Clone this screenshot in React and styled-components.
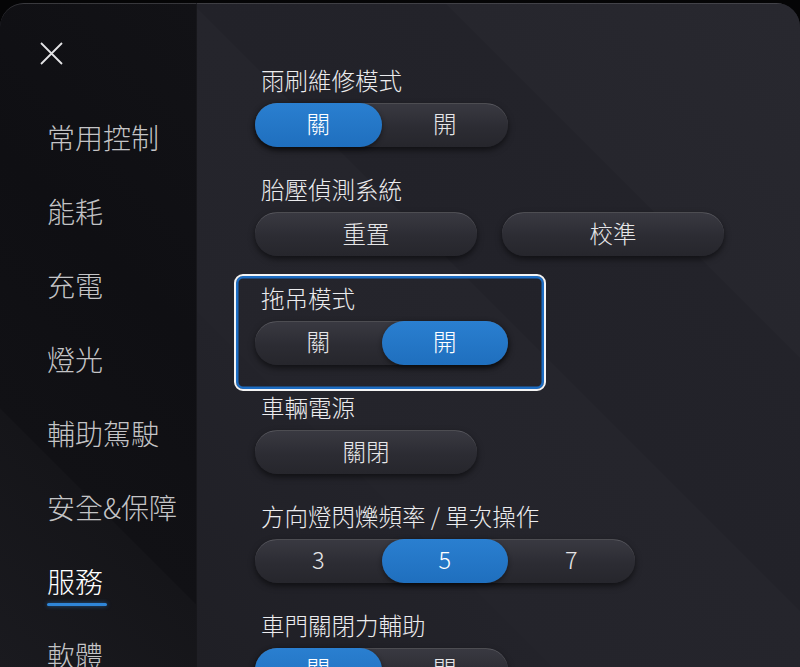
import React from "react";
import styled, { createGlobalStyle, css } from "styled-components";

const Global = createGlobalStyle`
  html, body { margin: 0; padding: 0; background: #050506; }
  body { font-family: "Noto Sans CJK TC", "Noto Sans", sans-serif; }
  #root { height: 667px; overflow: hidden; }
`;

const Screen = styled.div`
  height: 667px;
  padding-top: 3px;
  box-sizing: border-box;
  background: #050506;
`;

const Panel = styled.div`
  height: 100%;
  display: flex;
  border-radius: 24px 24px 0 0;
  overflow: hidden;
  background: #202027;
`;

const Sidebar = styled.nav`
  width: 197px;
  flex: none;
  box-sizing: border-box;
  padding: 38px 0 0 0;
  background: linear-gradient(45deg, #1a1a1f 0%, #151519 30%, #111115 30.2%, #0f0f13 60%, #121216 100%);
  border-right: 1px solid #17171b;
  border-top: 1px solid rgba(255, 255, 255, 0.14);
  border-radius: 24px 0 0 0;
`;

const CloseButton = styled.button`
  display: block;
  margin-left: 40px;
  width: 23px;
  height: 23px;
  padding: 0;
  border: 0;
  background: none;
  cursor: pointer;
`;

const NavList = styled.ul`
  list-style: none;
  margin: 35px 0 0 0;
  padding: 0;
`;

const NavItem = styled.li`
  height: 74px;
  display: flex;
  align-items: center;
  padding-left: 47px;
  font-size: 28px;
  line-height: 36px;
  font-weight: 300;
  color: ${(p) => (p.$active ? "#ffffff" : "#c4c4c6")};
  span {
    position: relative;
  }
  ${(p) =>
    p.$active &&
    css`
      span::after {
        content: "";
        position: absolute;
        left: 0;
        bottom: -7px;
        width: 60px;
        height: 3px;
        border-radius: 2px;
        background: #2f86d8;
        box-shadow: 0 0 4px rgba(47, 134, 216, 0.6);
      }
    `}
`;

const Main = styled.main`
  flex: 1;
  box-sizing: border-box;
  padding: 63px 0 0 58px;
  border-top: 1px solid rgba(255, 255, 255, 0.14);
  background: linear-gradient(
    45deg,
    #1f1f25 0%,
    #23232a 28%,
    #24242b 28.1%,
    #25252c 52%,
    #222229 52.1%,
    #23232a 72%,
    #26262d 72.1%,
    #28282f 100%
  );
`;

const Group = styled.section`
  position: relative;
  display: flex;
  flex-direction: column;
  align-items: flex-start;
  gap: 10px;
  margin-bottom: 29px;
  ${(p) =>
    p.$focused &&
    css`
      &::before {
        content: "";
        position: absolute;
        top: -11px;
        left: -21px;
        width: 308px;
        bottom: -26px;
        border: 2.5px solid #f4f4f4;
        border-radius: 9px;
        box-shadow: inset 0 0 0 2.5px #1c6cc2;
        pointer-events: none;
      }
    `}
`;

const Label = styled.h3`
  margin: 0;
  padding-left: 6px;
  font-size: 23.5px;
  line-height: 26px;
  font-weight: 300;
  color: #ececee;
  white-space: nowrap;
`;

const pill = css`
  height: 44px;
  border-radius: 22px;
  box-sizing: border-box;
  background: linear-gradient(to bottom, #393941 0%, #2c2c33 55%, #26262c 100%);
  border-top: 1px solid rgba(255, 255, 255, 0.18);
  box-shadow: 0 3px 6px rgba(0, 0, 0, 0.55);
`;

const Segmented = styled.div`
  ${pill};
  display: grid;
  grid-template-columns: repeat(${(p) => p.$count}, 126.5px);
`;

const Segment = styled.button`
  height: 44px;
  margin-top: -1px;
  border: 0;
  border-radius: 22px;
  padding: 0 0 4px 0;
  font-family: inherit;
  font-size: 23.5px;
  font-weight: 300;
  color: ${(p) => (p.$active ? "#ffffff" : "#e6e6e8")};
  background: ${(p) =>
    p.$active ? "linear-gradient(to bottom, #2a7fd0, #1f6fbe)" : "transparent"};
  box-shadow: ${(p) => (p.$active ? "0 2px 5px rgba(0,0,0,0.45)" : "none")};
  cursor: pointer;
`;

const ButtonRow = styled.div`
  display: flex;
  gap: 25px;
`;

const ActionButton = styled.button`
  ${pill};
  width: 222px;
  border-left: 0;
  border-right: 0;
  border-bottom: 0;
  padding: 0 0 4px 0;
  font-family: inherit;
  font-size: 23.5px;
  font-weight: 300;
  color: #e6e6e8;
  cursor: pointer;
`;

function SegmentedControl({ options, active }) {
  return (
    <Segmented $count={options.length}>
      {options.map((o, i) => (
        <Segment key={o} $active={i === active}>
          {o}
        </Segment>
      ))}
    </Segmented>
  );
}

const navItems = ["常用控制", "能耗", "充電", "燈光", "輔助駕駛", "安全&保障", "服務", "軟體"];

export default function App() {
  return (
    <>
      <Global />
      <Screen>
        <Panel>
          <Sidebar>
            <CloseButton aria-label="關閉">
              <svg width="23" height="23" viewBox="0 0 23 23">
                <path d="M1 1 22 22M22 1 1 22" stroke="#e4e4e6" strokeWidth="1.8" fill="none" />
              </svg>
            </CloseButton>
            <NavList>
              {navItems.map((n) => (
                <NavItem key={n} $active={n === "服務"}>
                  <span>{n}</span>
                </NavItem>
              ))}
            </NavList>
          </Sidebar>
          <Main>
            <Group>
              <Label>雨刷維修模式</Label>
              <SegmentedControl options={["關", "開"]} active={0} />
            </Group>
            <Group>
              <Label>胎壓偵測系統</Label>
              <ButtonRow>
                <ActionButton>重置</ActionButton>
                <ActionButton>校準</ActionButton>
              </ButtonRow>
            </Group>
            <Group $focused>
              <Label>拖吊模式</Label>
              <SegmentedControl options={["關", "開"]} active={1} />
            </Group>
            <Group>
              <Label>車輛電源</Label>
              <ActionButton>關閉</ActionButton>
            </Group>
            <Group>
              <Label>方向燈閃爍頻率 / 單次操作</Label>
              <SegmentedControl options={["3", "5", "7"]} active={1} />
            </Group>
            <Group>
              <Label>車門關閉力輔助</Label>
              <SegmentedControl options={["關", "開"]} active={0} />
            </Group>
          </Main>
        </Panel>
      </Screen>
    </>
  );
}
